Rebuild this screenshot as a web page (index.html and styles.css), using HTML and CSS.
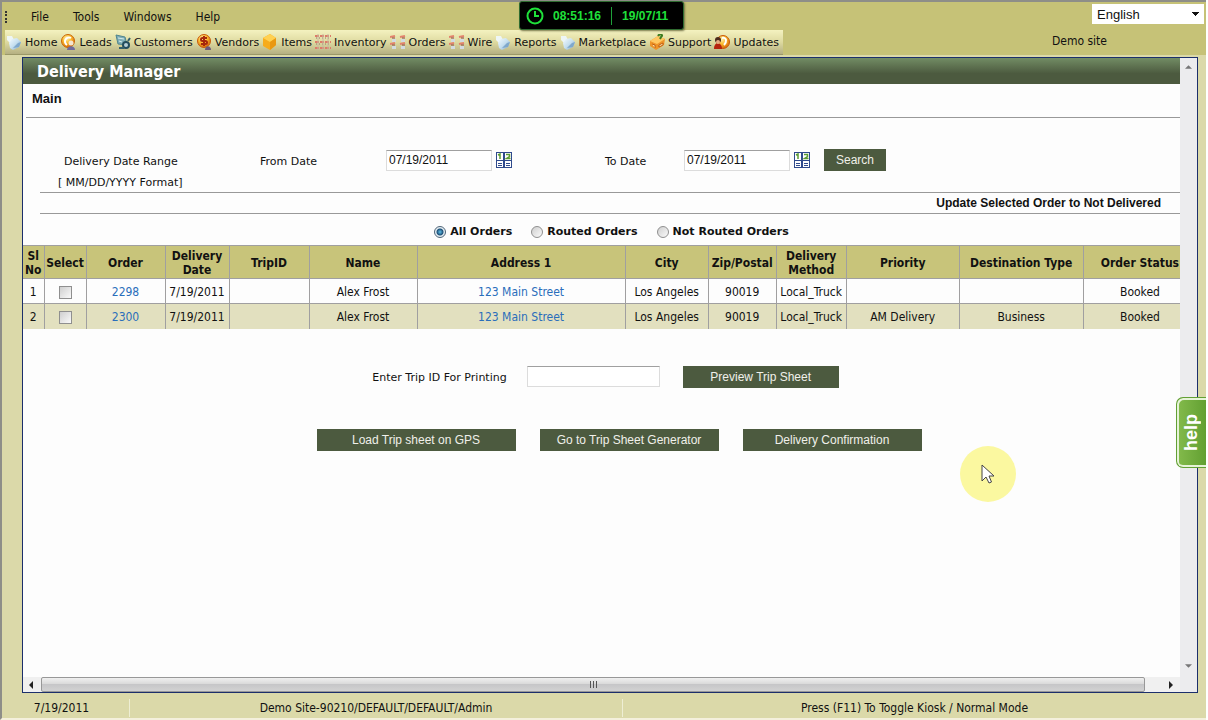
FILE: index.html
```html
<!DOCTYPE html>
<html lang="en">
<head>
  <meta charset="UTF-8">
  <meta name="viewport" content="width=device-width, initial-scale=1.0">
  <title>Delivery Manager</title>
  <link rel="stylesheet" href="styles.css">
</head>
<body>
  <!-- shared toolbar icons -->
  <svg width="0" height="0" class="sprites" aria-hidden="true">
    <defs>
      <linearGradient id="blueFade" x1="0" y1="0" x2="1" y2="1">
        <stop offset="0" stop-color="#f4fbff"/><stop offset="0.5" stop-color="#c6dfef"/><stop offset="1" stop-color="#7ba6cb"/>
      </linearGradient>
      <radialGradient id="gold" cx="0.4" cy="0.3" r="0.7">
        <stop offset="0" stop-color="#fff3b0"/><stop offset="0.5" stop-color="#fbb82c"/><stop offset="1" stop-color="#d86a0c"/>
      </radialGradient>
      <symbol id="cube" viewBox="0 0 16 16">
        <path d="M1 2l5 0 2 4-4 3-3-3z" fill="#eef6f6"/>
        <path d="M3 9l3-4 5-1 4 4-2 5-6 3-3-2z" fill="url(#blueFade)"/>
        <path d="M7 14l6-1 2-5-3 1z" fill="#7fa8cc"/>
      </symbol>
      <symbol id="crates" viewBox="0 0 16 16">
        <g fill="none" stroke="#e2826c" stroke-width="2"><path d="M0 3l5-1M10 3l5-1M0 10l5-1M10 10l5-1"/></g>
        <g fill="none" stroke="#8a4a40"><path d="M2 4h3M12 4h3M2 11h3M12 11h3"/></g>
        <g fill="#d3dce0"><path d="M2 5h4v3H2zM11 5h4v3h-4zM2 12h4v3H2zM11 12h4v3h-4z"/></g>
      </symbol>
    </defs>
  </svg>

  <div class="page">
    <header class="header">
      <nav class="menu">
        <span class="grip"></span>
        <a href="#">File</a>
        <a href="#">Tools</a>
        <a href="#">Windows</a>
        <a href="#">Help</a>
      </nav>
      <nav class="toolbar">
        <a href="#"><svg viewBox="0 0 16 16"><use href="#cube"/></svg>Home</a>
        <a href="#"><svg viewBox="0 0 16 16"><circle cx="8" cy="7" r="6.5" fill="url(#gold)" stroke="#c8680c"/><path d="M11 4a4 4 0 1 0-4 7" fill="none" stroke="#fff" stroke-width="2"/><circle cx="11" cy="9" r="2.5" fill="#f4e6d0"/><path d="M7 16c0-5 8-5 8 0z" fill="#6f6b9c"/></svg>Leads</a>
        <a href="#"><svg viewBox="0 0 16 16"><path d="M1 1l9 2 2 8-9-1z" fill="#7fadb5" stroke="#4f858e"/><path d="M3 4l6 1M4 7l3 1" stroke="#d5ebeb"/><circle cx="11" cy="11" r="3" fill="#b6cfd8" stroke="#244d5c" stroke-width="2"/><path d="M13 7l2-3M4 14h5" stroke="#35606c" stroke-width="2"/></svg>Customers</a>
        <a href="#"><svg viewBox="0 0 16 16"><circle cx="8" cy="7" r="6.5" fill="url(#gold)" stroke="#c85a0c"/><path d="M11 4H6.500c-2 0-2 3 0 3h3c2 0 2 3 0 3H5M8 2v10" fill="none" stroke="#a6270c" stroke-width="2"/><path d="M9 16c0-5 6-5 6 0z" fill="#6c5a7c"/></svg>Vendors</a>
        <a href="#"><svg viewBox="0 0 16 16"><path d="M8 0l6 4v7l-6 5-7-4V4z" fill="#f7ac1b"/><path d="M8 0l6 4-6 4-7-4z" fill="#ffd152"/><path d="M8 8v8l6-5V4z" fill="#e99812"/></svg>Items</a>
        <a href="#"><svg viewBox="0 0 16 16"><path d="M0 2h16M0 8h16M0 14h16" stroke="#dc7c68" stroke-width="2" stroke-dasharray="4 1"/><path d="M1 4h14M1 10h14" stroke="#8c7468" stroke-dasharray="1 2"/><path d="M3 0v16M8 0v16M13 0v16" stroke="#c9b8a0"/></svg>Inventory</a>
        <a href="#"><svg viewBox="0 0 16 16"><use href="#crates"/></svg>Orders</a>
        <a href="#"><svg viewBox="0 0 16 16"><use href="#crates"/></svg>Wire</a>
        <a href="#"><svg viewBox="0 0 16 16"><use href="#cube"/></svg>Reports</a>
        <a href="#"><svg viewBox="0 0 16 16"><use href="#cube"/></svg>Marketplace</a>
        <a href="#"><svg viewBox="0 0 16 16"><path d="M1 7l8-5 7 3-1 6-8 5-6-4z" fill="#ee9428"/><path d="M1 7l8-5 7 3-8 5z" fill="#ffc862"/><path d="M3 10l3 1v3M10 11l4-2v2l-4 2z" fill="#fff0c0" stroke="#c25d0d"/><path d="M9 2c2-3 6-1 3 1l-1 2" fill="none" stroke="#3c7c20" stroke-width="2"/></svg>Support</a>
        <a href="#"><svg viewBox="0 0 16 16"><circle cx="9" cy="8" r="6.500" fill="url(#gold)" stroke="#c85a0c"/><path d="M8 4c5-1 5 4 2 7" fill="none" stroke="#fff" stroke-width="2"/><circle cx="4" cy="6" r="3" fill="#4c2a1c"/><path d="M0 15c0-8 8-7 8 0z" fill="#b5240f"/><circle cx="4" cy="8" r="2" fill="#e5ab84"/></svg>Updates</a>
      </nav>
      <div class="account">
        <select class="language" aria-label="Language">
          <option>English</option>
        </select>
        <span class="site">Demo site</span>
      </div>
      <div class="clock">
        <svg viewBox="0 0 18 18"><circle cx="9" cy="9" r="7.500"/><path d="M9 4v5h4"/></svg>
        <span class="time">08:51:16</span>
        <span class="date">19/07/11</span>
      </div>
    </header>

    <main class="frame">
      <div class="content">
        <h1>Delivery Manager</h1>
        <h2>Main</h2>

        <form class="search">
          <span class="range">Delivery Date Range</span>
          <label for="fromDate">From Date</label>
          <div class="picker">
            <input type="text" id="fromDate" value="07/19/2011">
            <button type="button" class="calendar" aria-label="Pick from date"><svg viewBox="0 0 16 16"><path d="M0 0h16v16H0z" fill="#2f4a8c"/><path d="M1 1h6v7H1zM9 1h6v7H9zM1 9h6v6H1zM9 9h6v6H9z" fill="#fff"/><path d="M2 3l2-1v5M10 2.500h3.500v2l-3 2h4" fill="none" stroke="#5c9c34" stroke-width="1.500"/><path d="M2 11.500h4M2 13.500h4M10 11.500h4M10 13.500h4" stroke="#2f4a8c"/></svg></button>
          </div>
          <label for="toDate">To Date</label>
          <div class="picker">
            <input type="text" id="toDate" value="07/19/2011">
            <button type="button" class="calendar" aria-label="Pick to date"><svg viewBox="0 0 16 16"><path d="M0 0h16v16H0z" fill="#2f4a8c"/><path d="M1 1h6v7H1zM9 1h6v7H9zM1 9h6v6H1zM9 9h6v6H9z" fill="#fff"/><path d="M2 3l2-1v5M10 2.500h3.500v2l-3 2h4" fill="none" stroke="#5c9c34" stroke-width="1.500"/><path d="M2 11.500h4M2 13.500h4M10 11.500h4M10 13.500h4" stroke="#2f4a8c"/></svg></button>
          </div>
          <button type="button" class="btn btn-search">Search</button>
          <span class="format">[ MM/DD/YYYY Format]</span>
        </form>

        <div class="update"><a href="#">Update Selected Order to Not Delivered</a></div>

        <div class="filters">
          <label><input type="radio" name="orders" checked>All Orders</label>
          <label><input type="radio" name="orders">Routed Orders</label>
          <label><input type="radio" name="orders">Not Routed Orders</label>
        </div>

        <table class="orders">
          <colgroup>
            <col class="c-no"><col class="c-select"><col class="c-order"><col class="c-date"><col class="c-trip"><col class="c-name"><col class="c-address"><col class="c-city"><col class="c-zip"><col class="c-method"><col class="c-priority"><col class="c-type"><col class="c-status">
          </colgroup>
          <thead>
            <tr>
              <th>Sl No</th><th>Select</th><th>Order</th><th>Delivery Date</th><th>TripID</th><th>Name</th><th>Address 1</th><th>City</th><th>Zip/Postal</th><th>Delivery Method</th><th>Priority</th><th>Destination Type</th><th>Order Status</th>
            </tr>
          </thead>
          <tbody>
            <tr>
              <td>1</td><td><input type="checkbox" aria-label="Select order 2298"></td><td><a href="#">2298</a></td><td>7/19/2011</td><td></td><td>Alex Frost</td><td><a href="#">123 Main Street</a></td><td>Los Angeles</td><td>90019</td><td>Local_Truck</td><td></td><td></td><td>Booked</td>
            </tr>
            <tr>
              <td>2</td><td><input type="checkbox" aria-label="Select order 2300"></td><td><a href="#">2300</a></td><td>7/19/2011</td><td></td><td>Alex Frost</td><td><a href="#">123 Main Street</a></td><td>Los Angeles</td><td>90019</td><td>Local_Truck</td><td>AM Delivery</td><td>Business</td><td>Booked</td>
            </tr>
          </tbody>
        </table>

        <form class="trip">
          <label for="tripId">Enter Trip ID For Printing</label>
          <input type="text" id="tripId">
          <button type="button" class="btn btn-preview">Preview Trip Sheet</button>
        </form>

        <div class="actions">
          <button type="button" class="btn btn-load">Load Trip sheet on GPS</button>
          <button type="button" class="btn">Go to Trip Sheet Generator</button>
          <button type="button" class="btn">Delivery Confirmation</button>
        </div>
      </div>

      <div class="vscroll">
        <svg viewBox="0 0 8 4"><path d="M0 4l4-4 4 4z"/></svg>
        <svg viewBox="0 0 8 4"><path d="M0 0l4 4 4-4z"/></svg>
      </div>
      <div class="hscroll">
        <svg viewBox="0 0 4 8"><path d="M4 0L0 4l4 4z"/></svg>
        <div class="thumb"><i></i><i></i><i></i></div>
        <svg viewBox="0 0 4 8"><path d="M0 0l4 4-4 4z"/></svg>
      </div>
    </main>

    <footer class="status">
      <span>7/19/2011</span>
      <span>Demo Site-90210/DEFAULT/DEFAULT/Admin</span>
      <span>Press (F11) To Toggle Kiosk / Normal Mode</span>
    </footer>

    <button type="button" class="help"><span>help</span></button>
    <div class="pointer">
      <svg viewBox="0 0 13 20"><path d="M1 1v16l4-4 3 6 2.500-1-2.500-6h5z" fill="#fff" stroke="#444"/></svg>
    </div>
  </div>
</body>
</html>
```
FILE: styles.css
```css
* {
  box-sizing: border-box;
}
body {
  margin: 0;
  background-color: #fff;
  font-family: "DejaVu Sans", Verdana, sans-serif;
  font-size: 11px;
  color: #111;
}
a {
  color: inherit;
  text-decoration: none;
}
.sprites {
  position: absolute;
}
.page {
  position: relative;
  display: flex;
  flex-direction: column;
  height: 100vh;
  margin-right: 2px;
  border-top: 2px solid #8e8e88;
  border-left: 2px solid #8e8e88;
  border-bottom: 2px solid #f4f0dc;
  background-color: #dbd9a9;
}

/* header */
.header {
  position: relative;
  display: grid;
  grid-template-columns: 1fr auto;
  grid-template-rows: 28px 25px;
  background-color: #c6c277;
}
.menu {
  display: flex;
  align-items: center;
  gap: 24px;
  padding: 2px 0 0 3px;
  font-family: "DejaVu Sans Condensed", Tahoma, sans-serif;
  font-size: 12px;
}
.grip {
  width: 2px;
  height: 12px;
  border-left: 2px dotted #333;
}
.toolbar {
  display: flex;
  align-items: center;
  justify-self: start;
  gap: 3px;
  margin-left: 3px;
  padding: 0 4px 0 1px;
  height: 25px;
  white-space: nowrap;
  background: linear-gradient(#f4f2c0, #dedaa0 50%, #b5b083);
  border-bottom: 1px solid #9b9868;
}
.toolbar a {
  display: flex;
  align-items: center;
  gap: 3px;
}
.toolbar svg {
  width: 16px;
  height: 16px;
}
.account {
  grid-column: 2;
  grid-row: 1 / 3;
  display: flex;
  flex-direction: column;
  align-items: flex-end;
  padding: 2px 2px 0 0;
  font-family: "DejaVu Sans Condensed", Tahoma, sans-serif;
  font-size: 12px;
}
.language {
  width: 112px;
  height: 20px;
  padding: 0 5px;
  border: none;
  appearance: none;
  background: linear-gradient(135deg, #111 50%, transparent 50%) right 4px top 8px / 4px 4px no-repeat,
    linear-gradient(225deg, #111 50%, transparent 50%) right 8px top 8px / 4px 4px no-repeat, #fff;
  font-family: "Liberation Sans", Arial, sans-serif;
  font-size: 13px;
  color: #111;
}
.site {
  margin: 10px 97px 0 0;
}
.clock {
  position: absolute;
  top: -1px;
  left: 50%;
  display: flex;
  align-items: center;
  width: 165px;
  height: 29px;
  margin-left: -85px;
  padding-left: 6px;
  border: 1px solid #2f6b30;
  border-radius: 3px;
  background-color: #000;
  box-shadow: 1px 1px 2px #77764a;
  color: #1fe03a;
  font: bold 12px "Liberation Sans", Arial, sans-serif;
}
.clock svg {
  width: 18px;
  height: 18px;
  fill: none;
  stroke: #1fe03a;
  stroke-width: 2;
}
.time {
  margin-left: 9px;
  padding-right: 10px;
}
.date {
  padding-left: 10px;
  border-left: 1px solid #1fa03a;
  line-height: 18px;
}

/* framed window */
.frame {
  flex: 1;
  display: grid;
  grid-template-columns: minmax(0, 1fr) 17px;
  grid-template-rows: minmax(0, 1fr) 15px;
  margin: 2px 8px 0 20px;
  border: 1px solid #1c2f6b;
  background-color: #fdfdfd;
}
.content {
  overflow: hidden;
}
h1 {
  margin: 0;
  padding: 2px 0 0 14px;
  background: linear-gradient(#728c64, #4c5a3f 60%);
  color: #fff;
  font: bold 16px/24px "DejaVu Sans Condensed", Tahoma, sans-serif;
}
h2 {
  margin: 0 0 0 3px;
  padding-left: 6px;
  border-bottom: 1px solid #999;
  font: bold 13px/29px "Liberation Sans", Arial, sans-serif;
  height: 34px;
}
input[type="text"] {
  height: 21px;
  padding: 0 2px;
  border: 1px solid #dcdcdc;
  border-top-color: #a0a0a0;
  background-color: #fff;
  font: 12px "Liberation Sans", Arial, sans-serif;
  color: #111;
}
.search {
  display: grid;
  grid-template-columns: 202px 126px 219px 79px 140px auto;
  grid-template-rows: 22px 21px;
  justify-content: start;
  align-items: center;
  margin: 31px 0 0 17px;
  padding-left: 18px;
}
.search span,
.search label {
  padding-top: 2px;
}
.range {
  padding-left: 6px;
}
.picker {
  display: flex;
  align-items: center;
  gap: 4px;
}
.picker input {
  width: 106px;
}
.calendar {
  width: 16px;
  height: 16px;
  padding: 0;
  border: none;
  background: none;
}
.calendar svg {
  display: block;
}
.btn {
  height: 22px;
  width: 179px;
  padding: 0;
  border: none;
  background-color: #4c5a3f;
  color: #f0f0ea;
  font: 12px "Liberation Sans", Arial, sans-serif;
}
.btn-search {
  width: 62px;
}
.btn-preview {
  width: 156px;
}
.btn-load {
  width: 199px;
}
.update {
  margin-left: 17px;
  padding-right: 19px;
  border-top: 1px solid #999;
  border-bottom: 1px solid #999;
  text-align: right;
  font: bold 12px/20px "Liberation Sans", Arial, sans-serif;
}
.filters {
  display: flex;
  justify-content: center;
  align-items: center;
  gap: 19px;
  height: 31px;
  padding: 4px 0 0 20px;
  font-weight: bold;
}
.filters label {
  display: flex;
  align-items: center;
  gap: 4px;
}
input[type="radio"],
input[type="checkbox"] {
  width: 13px;
  height: 13px;
  margin: 0;
  border: 1px solid #8f8f8f;
  appearance: none;
  background: linear-gradient(135deg, #cfcfcf, #fafafa);
}
input[type="radio"] {
  width: 12px;
  height: 12px;
  border-radius: 50%;
}
input[type="radio"]:checked {
  border-color: #4d6478;
  background: radial-gradient(#5fc0e8, #1c4f78 3px, #e4edf2 4px);
}

/* orders table, runs past the right edge and is clipped */
.orders {
  width: 101.4%;
  table-layout: fixed;
  border-collapse: collapse;
  font-family: "DejaVu Sans Condensed", Tahoma, sans-serif;
  font-size: 12px;
  text-align: center;
}
.orders th,
.orders td {
  padding: 2px 0 0;
  border-left: 1px solid #a09fa0;
  border-top: 1px solid #a09fa0;
}
.orders th:first-child,
.orders td:first-child {
  border-left: none;
}
.orders th {
  height: 33px;
  line-height: 14px;
  background-color: #c8c47a;
}
.orders td {
  height: 25px;
  white-space: nowrap;
}
.orders tbody tr:nth-child(even) {
  background-color: #e2e0bf;
}
.orders a {
  color: #2a6ebb;
}
.orders input {
  display: block;
  margin: 0 auto;
}
.c-no { width: 21px; }
.c-select { width: 42px; }
.c-order { width: 79px; }
.c-date { width: 64px; }
.c-trip { width: 80px; }
.c-name { width: 108px; }
.c-city { width: 83px; }
.c-zip { width: 68px; }
.c-method { width: 70px; }
.c-priority { width: 113px; }
.c-type { width: 124px; }
.c-status { width: 113px; }

/* trip sheet controls */
.trip {
  display: flex;
  justify-content: center;
  align-items: center;
  margin-top: 37px;
  padding-left: 8px;
}
.trip input {
  width: 133px;
  margin: 0 23px 0 20px;
}
.trip label {
  padding-top: 2px;
}
.actions {
  display: flex;
  justify-content: center;
  gap: 24px;
  margin-top: 41px;
  padding-left: 35px;
}

/* scrollbars */
.vscroll {
  grid-row: 1 / 3;
  grid-column: 2;
  display: flex;
  flex-direction: column;
  justify-content: space-between;
  align-items: center;
  padding: 7px 0 24px;
  background-color: #ececee;
}
.vscroll svg {
  width: 7px;
  height: 4px;
  fill: #777;
}
.hscroll {
  display: flex;
  align-items: center;
  justify-content: space-between;
  padding: 0 7px 0 6px;
  background-color: #f0f0f0;
}
.hscroll svg {
  width: 4px;
  height: 8px;
  fill: #222;
}
.thumb {
  flex: 1;
  display: flex;
  justify-content: center;
  align-items: center;
  gap: 2px;
  height: 15px;
  margin: 0 24px 0 8px;
  border: 1px solid #989898;
  border-radius: 2px;
  background: linear-gradient(#f0f0f0, #dadada 45%, #c6c6c8 50%, #d2d2d2);
}
.thumb i {
  width: 1px;
  height: 7px;
  background-color: #555;
}

/* status bar */
.status {
  display: grid;
  grid-template-columns: 127px 493px 1fr;
  align-items: center;
  height: 25px;
  padding-top: 5px;
  font-family: "DejaVu Sans Condensed", Tahoma, sans-serif;
  font-size: 12px;
  text-align: center;
}
.status span + span {
  border-left: 1px solid #eeeed4;
}
.status span {
  line-height: 18px;
}
.status span:first-child {
  padding-right: 8px;
}

/* floating items */
.help {
  position: absolute;
  top: 395px;
  right: 0;
  display: flex;
  align-items: center;
  justify-content: center;
  width: 30px;
  height: 71px;
  padding: 0;
  border: 1px solid #63a035;
  border-right: none;
  border-radius: 7px 0 0 7px;
  background: linear-gradient(90deg, #84bb4c, #62a032);
  box-shadow: inset 1px 1px 0 1px #e6f3d8, inset 0 -2px 0 #e6f3d8;
  color: #fff;
  font: bold 18px "Liberation Sans", Arial, sans-serif;
}
.help span {
  writing-mode: vertical-rl;
  rotate: 180deg;
}
.pointer {
  position: absolute;
  top: 444px;
  left: 958px;
  width: 56px;
  height: 56px;
  border-radius: 50%;
  background-color: #fbf8a0;
}
.pointer svg {
  width: 13px;
  height: 20px;
  margin: 18px 0 0 21px;
}
```
